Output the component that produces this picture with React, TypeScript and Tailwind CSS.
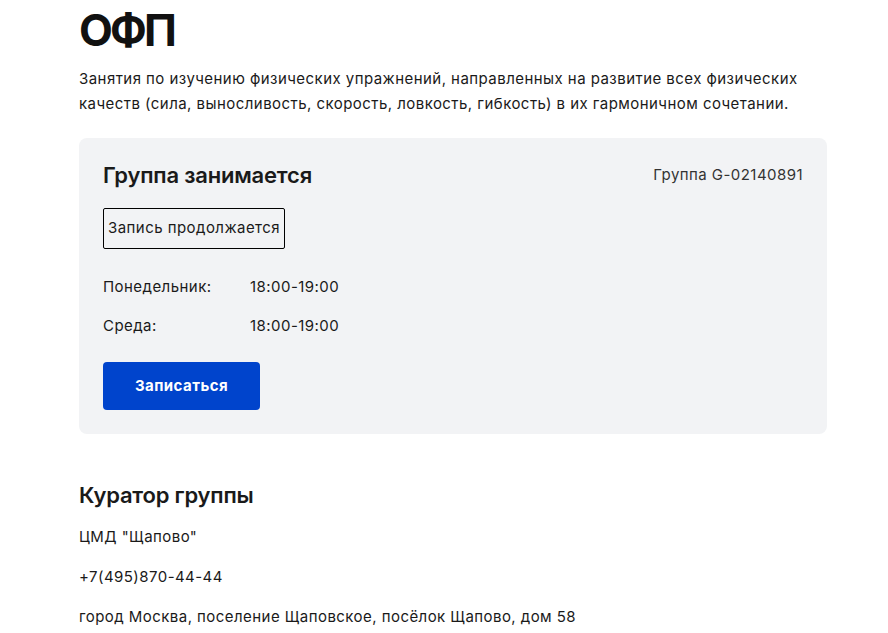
export default function App() {
  const schedule = [
    { day: "Понедельник:", time: "18:00-19:00" },
    { day: "Среда:", time: "18:00-19:00" },
  ];

  return (
    <div className="min-h-screen bg-white font-['Inter',sans-serif] text-[#1a1a1a] tracking-[0.45px]">
      <div className="ml-[79px] w-[748px]">
        <h1 className="pt-[6px] text-[44px] font-bold leading-[48px] tracking-[-2.8px] text-[#111]">ОФП</h1>
        <p className="mt-[12px] text-[15px] leading-[25px]">
          Занятия по изучению физических упражнений, направленных на развитие всех физических качеств (сила,
          выносливость, скорость, ловкость, гибкость) в их гармоничном сочетании.
        </p>

        <div className="mt-[22px] rounded-lg bg-[#f2f3f5] px-6 pt-[22px] pb-6">
          <div className="flex items-center justify-between">
            <h2 className="text-[22px] font-semibold leading-[30px] tracking-[-0.2px]">Группа занимается</h2>
            <span className="text-[15px] text-[#333]">Группа G-02140891</span>
          </div>
          <div className="mt-[18px] inline-flex h-[41px] items-center rounded-[2px] border border-black px-[4px] text-[15px]">
            Запись продолжается
          </div>
          <div className="mt-[28px] flex flex-col gap-[19px]">
            {schedule.map((row) => (
              <div key={row.day} className="flex text-[15px] leading-[20px]">
                <span className="w-[147px]">{row.day}</span>
                <span>{row.time}</span>
              </div>
            ))}
          </div>
          <button className="mt-[26px] h-[48px] w-[157px] rounded bg-[#0044cc] text-[15px] font-bold text-white">
            Записаться
          </button>
        </div>

        <h2 className="mt-[46px] text-[22px] font-semibold leading-[30px] tracking-[-0.2px]">Куратор группы</h2>
        <div className="mt-[17px] flex flex-col gap-[20px] text-[15px] leading-[20px]">
          <p>ЦМД "Щапово"</p>
          <p>+7(495)870-44-44</p>
          <p>город Москва, поселение Щаповское, посёлок Щапово, дом 58</p>
        </div>
      </div>
    </div>
  );
}
